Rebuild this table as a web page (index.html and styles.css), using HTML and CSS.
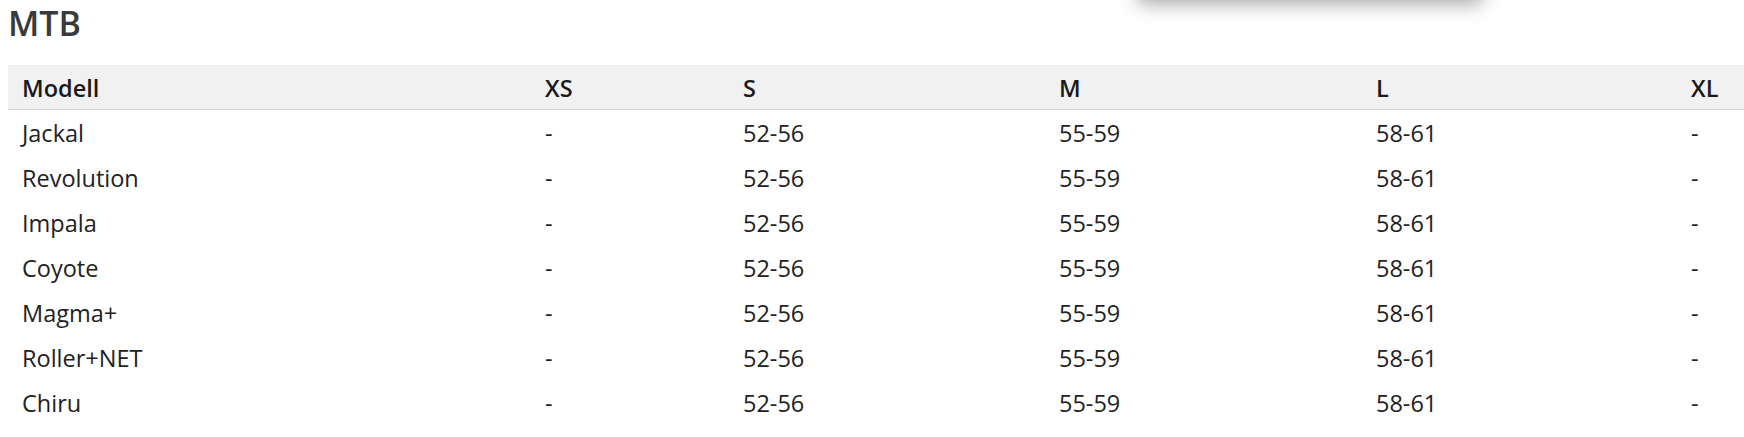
FILE: index.html
```html
<!DOCTYPE html>
<html lang="de">
<head>
<meta charset="utf-8">
<title>MTB</title>
<link rel="stylesheet" href="styles.css">
</head>
<body>
<div class="popup-shadow"></div>
<main class="page">
  <h1 class="title">MTB</h1>
  <table class="size-table">
    <colgroup>
      <col class="c-model">
      <col class="c-xs">
      <col class="c-s">
      <col class="c-m">
      <col class="c-l">
      <col class="c-xl">
    </colgroup>
    <thead>
      <tr><th>Modell</th><th>XS</th><th>S</th><th>M</th><th>L</th><th>XL</th></tr>
    </thead>
    <tbody>
      <tr><td>Jackal</td><td>-</td><td>52-56</td><td>55-59</td><td>58-61</td><td>-</td></tr>
      <tr><td>Revolution</td><td>-</td><td>52-56</td><td>55-59</td><td>58-61</td><td>-</td></tr>
      <tr><td>Impala</td><td>-</td><td>52-56</td><td>55-59</td><td>58-61</td><td>-</td></tr>
      <tr><td>Coyote</td><td>-</td><td>52-56</td><td>55-59</td><td>58-61</td><td>-</td></tr>
      <tr><td>Magma+</td><td>-</td><td>52-56</td><td>55-59</td><td>58-61</td><td>-</td></tr>
      <tr><td>Roller+NET</td><td>-</td><td>52-56</td><td>55-59</td><td>58-61</td><td>-</td></tr>
      <tr><td>Chiru</td><td>-</td><td>52-56</td><td>55-59</td><td>58-61</td><td>-</td></tr>
    </tbody>
  </table>
</main>
</body>
</html>
```
FILE: styles.css
```css
html, body {
  margin: 0;
  padding: 0;
  background: #fff;
  overflow: hidden;
}
body {
  font-family: "Open Sans", "Noto Sans", sans-serif;
  color: #222;
  width: 1744px;
  height: 437px;
  position: relative;
}
.page {
  padding: 3px 0 0 8px;
}
.title {
  margin: 0 0 21px 0;
  font-size: 34px;
  line-height: 1.2;
  font-weight: 600;
  color: #3a3a3a;
}
.size-table {
  border-collapse: collapse;
  table-layout: fixed;
  width: 1736px;
  font-size: 23.5px;
}
.c-model { width: 523px; }
.c-xs { width: 198px; }
.c-s { width: 316px; }
.c-m { width: 317px; }
.c-l { width: 315px; }
.c-xl { width: 67px; }
.size-table th,
.size-table td {
  height: 45px;
  padding: 2px 0 0 14px;
  text-align: left;
  vertical-align: middle;
  line-height: 1.2;
  box-sizing: border-box;
}
.size-table thead th {
  background: #f1f1f1;
  font-weight: 600;
  color: #1a1a1a;
  border-bottom: 1px solid #cfcfcf;
}
.popup-shadow {
  position: absolute;
  top: -60px;
  left: 1138px;
  width: 344px;
  height: 60px;
  background: #fff;
  box-shadow: 0 4px 18px rgba(0, 0, 0, 0.35);
}
```
